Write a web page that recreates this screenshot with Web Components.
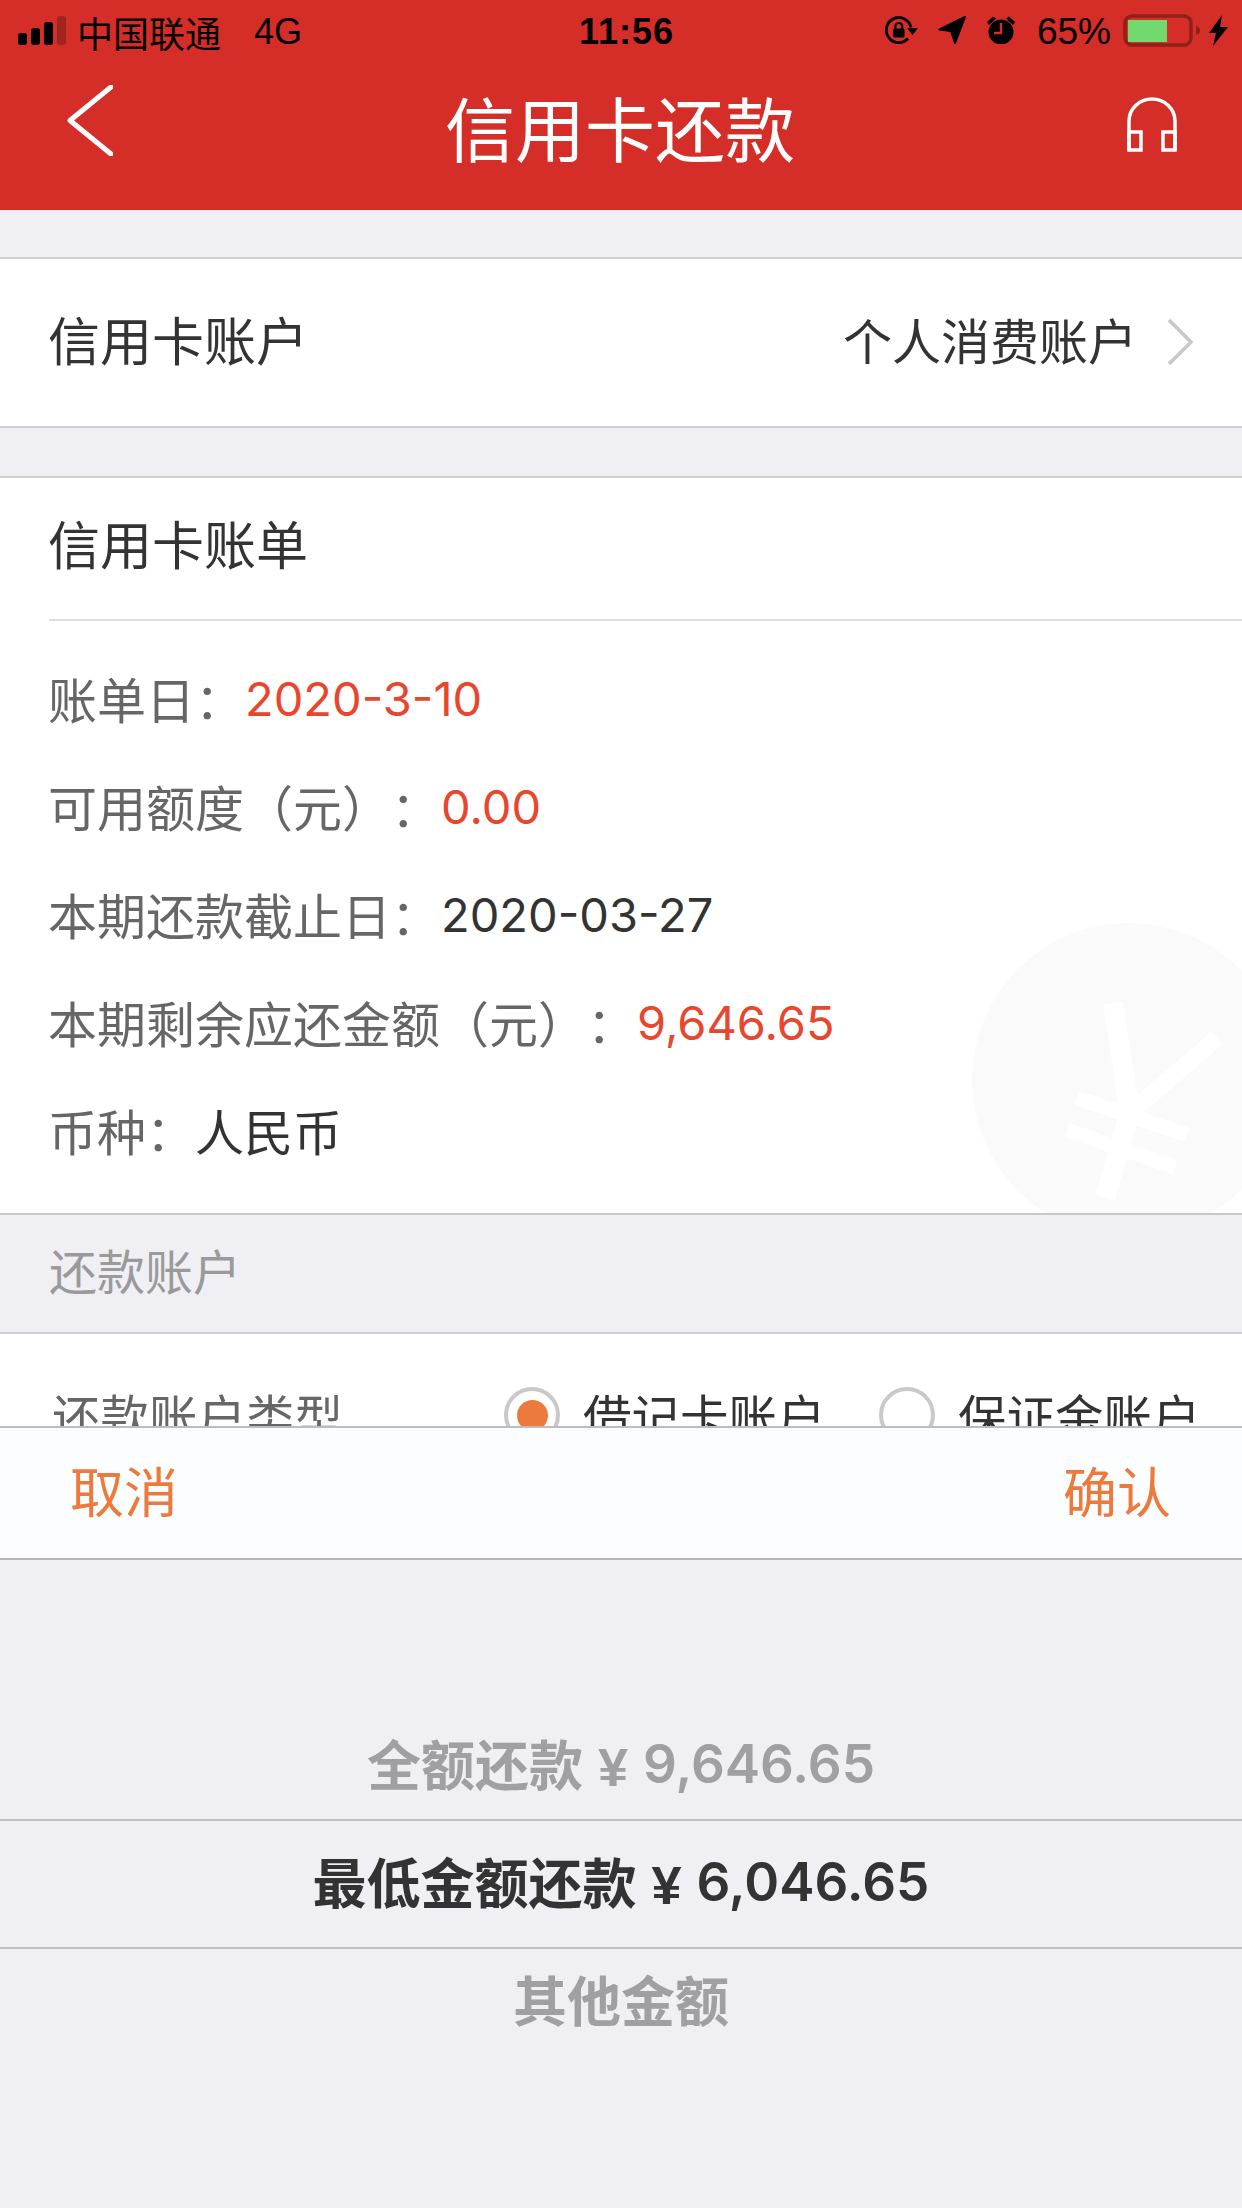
<!DOCTYPE html>
<html lang="zh">
<head>
<meta charset="utf-8">
<style>
  html, body { margin: 0; padding: 0; background: #efeff4; }
  body { width: 1242px; height: 2208px; overflow: hidden; font-family: "Liberation Sans", "Noto Sans CJK SC", sans-serif; color: #333; text-spacing-trim: space-all; }
  .scroll { height: 1426px; overflow: hidden; }
  .num { font-family: Inter, "Liberation Sans", sans-serif; font-size: 47px; padding-top: 3px; margin-left: 1px; }
  .red { color: #e8472f; }
  .dark { color: #333; }
</style>
</head>
<body>
<div class="scroll">
  <top-bar></top-bar>
  <link-row label="信用卡账户" value="个人消费账户"></link-row>
  <bill-card>
    <span slot="title">信用卡账单</span>
    <bill-line label="账单日："><span class="num red">2020-3-10</span></bill-line>
    <bill-line label="可用额度（元）："><span class="num red">0.00</span></bill-line>
    <bill-line label="本期还款截止日："><span class="num dark">2020-03-27</span></bill-line>
    <bill-line label="本期剩余应还金额（元）："><span class="num red">9,646.65</span></bill-line>
    <bill-line label="币种："><span class="dark">人民币</span></bill-line>
  </bill-card>
  <section-head>还款账户</section-head>
  <account-type></account-type>
</div>
<action-bar></action-bar>
<amount-picker></amount-picker>

<script>
class TopBar extends HTMLElement {
  constructor() {
    super();
    this.attachShadow({ mode: 'open' });
  }

  connectedCallback() {
    this.shadowRoot.innerHTML = `
      <style>
        :host { display: block; background: #d52d27; height: 210px; }
        .status {
          display: grid;
          grid-template-columns: 1fr auto 1fr;
          align-items: center;
          height: 60px;
          padding: 0 14px 0 18px;
          box-sizing: border-box;
          color: #000;
          font-size: 36px;
        }
        .left, .right { display: flex; align-items: center; }
        .right { justify-content: flex-end; }
        .carrier, .net, .time, .pct { padding-top: 3px; }
        .carrier { margin-left: 11px; }
        .net { margin-left: 33px; }
        .time { font-weight: bold; font-size: 36px; letter-spacing: 1px; margin-left: 7px; }
        .pct { margin: 0 12px 0 21px; font-size: 37px; }
        svg { display: block; flex: none; }
        nav {
          display: flex;
          align-items: center;
          justify-content: space-between;
          height: 150px;
          padding: 0 65px 24px 67px;
          box-sizing: border-box;
        }
        nav .back { margin-bottom: 5px; }
        nav .phones { margin-top: 3px; }
        h1 {
          margin: 20px 0 0;
          font-size: 70px;
          font-weight: normal;
          color: #fff;
          line-height: 1;
          flex: 1;
          text-align: center;
        }
      </style>
      <div class="status">
        <div class="left">
          <svg width="48" height="29" viewBox="0 0 48 29">
            <g fill="#000"><rect x="0" y="17" width="9" height="12" rx="3"/><rect x="13" y="12" width="9" height="17" rx="3"/><rect x="26" y="6" width="9" height="23" rx="3"/></g>
            <rect x="39" y="0" width="9" height="29" rx="3" fill="#a02420"/>
          </svg>
          <span class="carrier">中国联通</span>
          <span class="net">4G</span>
        </div>
        <div class="time">11:56</div>
        <div class="right">
          <svg width="33" height="30" viewBox="0 0 33 30" style="margin-right:20px">
            <path d="M23 23.500A12.500 12.500 0 1 1 26 12.500" fill="none" stroke="#000" stroke-width="2.800"/>
            <path d="M22 13h11l-5.500 7z" fill="#000"/>
            <rect x="8" y="13.500" width="11.500" height="9" rx="1.500" fill="#000"/>
            <path d="M10.300 14v-2.500a3.500 3.500 0 0 1 7 0V14" fill="none" stroke="#000" stroke-width="2.200"/>
          </svg>
          <svg width="29" height="28" viewBox="0 0 29 28" style="margin-right:19px">
            <path d="M27 1 1.500 13.500 13 15 17 27z" fill="#000" stroke="#000" stroke-width="2" stroke-linejoin="round"/>
          </svg>
          <svg width="30" height="28" viewBox="0 0 30 28">
            <circle cx="15" cy="16" r="12.500" fill="#000"/>
            <path d="M1 6 7 .5l3 2-7 6.500zM29 6 23 .5l-3 2 7 6.500z" fill="#000"/>
            <path d="M15 7v10H8" fill="none" stroke="#d52d27" stroke-width="2.400"/>
          </svg>
          <span class="pct">65%</span>
          <svg width="77" height="33" viewBox="0 0 77 33">
            <rect x="2" y="2" width="66" height="29" rx="7" fill="none" stroke="#8f211d" stroke-width="3.500"/>
            <rect x="5" y="6" width="39" height="22" fill="#72d96f"/>
            <path d="M73 12c3 1 4 2.500 4 4.500s-1 3.500-4 4.500z" fill="#8f211d"/>
          </svg>
          <svg width="19" height="31" viewBox="0 0 19 31" style="margin-left:9px">
            <path d="M13 0 0 18h7L4 31 19 12h-8z" fill="#000"/>
          </svg>
        </div>
      </div>
      <nav>
        <svg class="back" width="46" height="71" viewBox="0 0 46 71">
          <path d="M44 2 3 35.500 44 69" fill="none" stroke="#fff" stroke-width="5" stroke-linecap="round" stroke-linejoin="round"/>
        </svg>
        <h1>信用卡还款</h1>
        <svg class="phones" width="50" height="55" viewBox="0 0 50 55">
          <path d="M2 53V24a23 22 0 0 1 46 0v29" fill="none" stroke="#fff" stroke-width="3.500"/>
          <path d="M2 35h12v18H2zM36 35h12v18H36z" fill="none" stroke="#fff" stroke-width="3.500"/>
        </svg>
      </nav>
    `;
  }
}

class LinkRow extends HTMLElement {
  constructor() {
    super();
    this.attachShadow({ mode: 'open' });
  }

  connectedCallback() {
    this.shadowRoot.innerHTML = `
      <style>
        :host {
          display: flex;
          align-items: center;
          margin-top: 47px;
          height: 171px;
          box-sizing: border-box;
          padding: 0 49px 0 48px;
          background: #fff;
          border-top: 2px solid #d0d0d2;
          border-bottom: 2px solid #d0d0d2;
        }
        .label { font-size: 52px; color: #333; flex: 1; padding-bottom: 8px; }
        .value { font-size: 49px; color: #333; margin-right: 30px; padding-bottom: 8px; }
        svg { display: block; margin-bottom: 2px; }
      </style>
      <span class="label">${this.getAttribute('label')}</span>
      <span class="value">${this.getAttribute('value')}</span>
      <svg width="26" height="48" viewBox="0 0 26 48">
        <path d="M2 2 24 24 2 46" fill="none" stroke="#c7c7cc" stroke-width="3.500"/>
      </svg>
    `;
  }
}

class BillCard extends HTMLElement {
  constructor() {
    super();
    this.attachShadow({ mode: 'open' });
  }

  connectedCallback() {
    this.shadowRoot.innerHTML = `
      <style>
        :host {
          display: block;
          position: relative;
          overflow: hidden;
          margin-top: 48px;
          height: 739px;
          box-sizing: border-box;
          background: #fff;
          border-top: 2px solid #d0d0d2;
          border-bottom: 2px solid #c8c8ca;
        }
        .title {
          margin-left: 49px;
          height: 143px;
          padding-bottom: 12px;
          box-sizing: border-box;
          display: flex;
          align-items: center;
          font-size: 52px;
          color: #333;
          border-bottom: 2px solid #dedee0;
        }
        ::slotted([slot="title"]) { margin-left: -1px; }
        .lines { position: relative; padding: 22px 0 0 48px; }
        svg { position: absolute; left: 0; top: -478px; }
      </style>
      <svg width="1242" height="1214" viewBox="0 0 1242 1214">
        <circle cx="1129" cy="1080" r="157" fill="#fafafa"/>
        <g stroke="#fff" fill="none">
          <path d="M1113 1003 1130 1113 1105 1197" stroke-width="20"/>
          <path d="M1217 1038 1130 1113" stroke-width="17"/>
          <path d="M1077 1098 1187 1135M1067 1130 1175 1167" stroke-width="15"/>
        </g>
      </svg>
      <div class="title"><slot name="title"></slot></div>
      <div class="lines"><slot></slot></div>
    `;
  }
}

class BillLine extends HTMLElement {
  constructor() {
    super();
    this.attachShadow({ mode: 'open' });
  }

  connectedCallback() {
    // the colon sits mid-height in the reference, which is the TC glyph
    const label = this.getAttribute('label').replace('：', '<span class="colon">：</span>');
    this.shadowRoot.innerHTML = `
      <style>
        :host {
          display: flex;
          align-items: center;
          height: 108px;
          font-size: 49px;
          white-space: nowrap;
        }
        .label { color: #666; }
        .colon { font-family: "Noto Sans CJK TC", sans-serif; }
      </style>
      <span class="label">${label}</span>
      <slot></slot>
    `;
  }
}

class SectionHead extends HTMLElement {
  constructor() {
    super();
    this.attachShadow({ mode: 'open' });
  }

  connectedCallback() {
    this.shadowRoot.innerHTML = `
      <style>
        :host {
          display: flex;
          align-items: center;
          height: 117px;
          box-sizing: border-box;
          padding: 0 0 10px 49px;
          font-size: 48px;
          color: #9a9a9a;
          background: #efeff4;
        }
      </style>
      <slot></slot>
    `;
  }
}

class AccountType extends HTMLElement {
  constructor() {
    super();
    this.attachShadow({ mode: 'open' });
  }

  connectedCallback() {
    this.shadowRoot.innerHTML = `
      <style>
        :host {
          display: flex;
          align-items: center;
          height: 166px;
          box-sizing: border-box;
          padding: 0 0 2px 52px;
          background: #fff;
          border-top: 2px solid #d0d0d2;
          font-size: 48.5px;
          white-space: nowrap;
        }
        .label { color: #666; width: 452px; flex: none; }
        .opt { display: flex; align-items: center; color: #333; width: 375px; flex: none; }
        .radio {
          width: 56px;
          height: 56px;
          box-sizing: border-box;
          border: 4px solid #c9c9c9;
          border-radius: 50%;
          margin-right: 23px;
          display: flex;
          align-items: center;
          justify-content: center;
        }
        .on::after {
          content: "";
          width: 31px;
          height: 31px;
          border-radius: 50%;
          background: #ec7a3c;
        }
      </style>
      <span class="label">还款账户类型</span>
      <span class="opt"><i class="radio on"></i>借记卡账户</span>
      <span class="opt"><i class="radio"></i>保证金账户</span>
    `;
  }
}

class ActionBar extends HTMLElement {
  constructor() {
    super();
    this.attachShadow({ mode: 'open' });
  }

  connectedCallback() {
    this.shadowRoot.innerHTML = `
      <style>
        :host {
          display: flex;
          align-items: center;
          justify-content: space-between;
          height: 134px;
          box-sizing: border-box;
          padding: 0 71px 8px 70px;
          background: #fbfdfe;
          border-top: 2px solid #bdbdc0;
          border-bottom: 2px solid #b5b5b8;
          font-size: 54px;
          color: #ec7a3c;
        }
      </style>
      <span>取消</span>
      <span>确认</span>
    `;
  }
}

class AmountPicker extends HTMLElement {
  constructor() {
    super();
    this.attachShadow({ mode: 'open' });
  }

  connectedCallback() {
    this.shadowRoot.innerHTML = `
      <style>
        :host {
          display: block;
          height: 648px;
          box-sizing: border-box;
          padding-top: 131px;
          background: #efeff4;
          font-size: 54px;
          font-weight: bold;
          text-align: center;
          color: #a0a0a3;
        }
        div {
          height: 128px;
          box-sizing: border-box;
          display: flex;
          align-items: center;
          justify-content: center;
          white-space: pre;
        }
        .sel { color: #333; border-top: 2px solid #bfbfc2; border-bottom: 2px solid #bfbfc2; height: 130px; padding-bottom: 7px; }
        .first { padding-top: 14px; }
        .last { padding-bottom: 30px; }
        b { font-family: Inter, "Liberation Sans", sans-serif; font-size: 53px; font-weight: 600; padding-top: 3px; }
      </style>
      <div class="first">全额还款 ¥ <b>9,646.65</b></div>
      <div class="sel">最低金额还款 ¥ <b>6,046.65</b></div>
      <div class="last">其他金额</div>
    `;
  }
}

customElements.define('top-bar', TopBar);
customElements.define('link-row', LinkRow);
customElements.define('bill-card', BillCard);
customElements.define('bill-line', BillLine);
customElements.define('section-head', SectionHead);
customElements.define('account-type', AccountType);
customElements.define('action-bar', ActionBar);
customElements.define('amount-picker', AmountPicker);
</script>
</body>
</html>
